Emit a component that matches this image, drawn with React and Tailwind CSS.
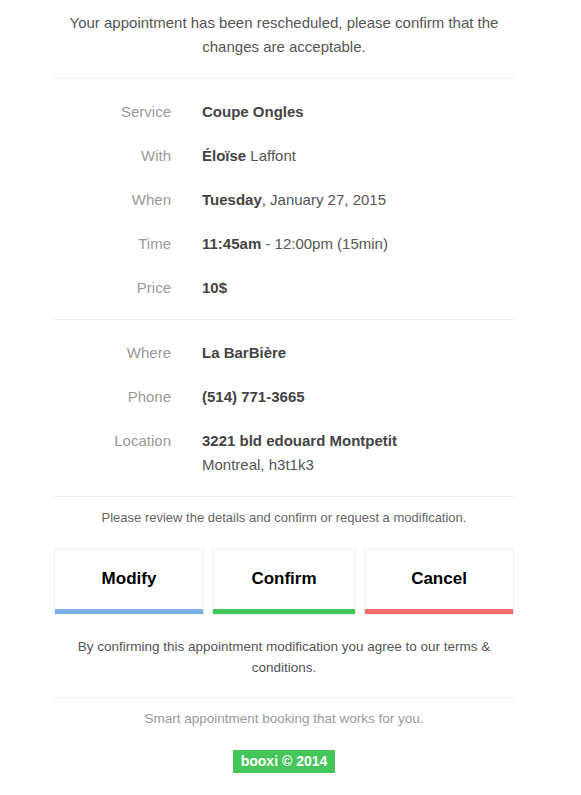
import React from "react";

const Row = ({ label, children }) => (
  <div className="flex pt-[11px] pb-[9px]">
    <div className="w-[117px] shrink-0 text-right text-[#999] leading-[24px]">{label}</div>
    <div className="pl-[31px] text-[#555] leading-[24px]">{children}</div>
  </div>
);

export default function App() {
  return (
    <div className="w-[581px] min-h-[795px] bg-white" style={{ fontFamily: '"Liberation Sans", sans-serif' }}>
      <div className="ml-[54px] w-[460px] text-[15px]">
        <p className="pt-[11px] pb-[19px] text-center leading-[24px] text-[#555]">
          Your appointment has been rescheduled, please confirm that the changes are acceptable.
        </p>
        <div className="h-px bg-[#eeeeee]" />
        <div className="py-[10px]">
          <Row label="Service"><b className="text-[#444]">Coupe Ongles</b></Row>
          <Row label="With"><b className="text-[#444]">Éloïse</b> Laffont</Row>
          <Row label="When"><b className="text-[#444]">Tuesday</b>, January 27, 2015</Row>
          <Row label="Time"><b className="text-[#444]">11:45am</b> - 12:00pm (15min)</Row>
          <Row label="Price"><b className="text-[#444]">10$</b></Row>
        </div>
        <div className="h-px bg-[#eeeeee]" />
        <div className="py-[10px]">
          <Row label="Where"><b className="text-[#444]">La BarBière</b></Row>
          <Row label="Phone"><b className="text-[#444]">(514) 771-3665</b></Row>
          <Row label="Location">
            <b className="text-[#444]">3221 bld edouard Montpetit</b>
            <br />
            Montreal, h3t1k3
          </Row>
        </div>
        <div className="h-px bg-[#eeeeee]" />
        <p className="pt-[11px] pb-[20px] text-center text-[13px] leading-[20px] text-[#666]">
          Please review the details and confirm or request a modification.
        </p>
        <div className="grid grid-cols-[150px_144px_150px] gap-2">
          <button className="h-[67px] border border-[#eeeeee] bg-white flex flex-col">
            <span className="flex-1 flex items-center justify-center text-[17px] font-bold text-black">Modify</span>
            <span className="h-[5px] bg-[#7aaee6]" />
          </button>
          <button className="h-[67px] border border-[#eeeeee] bg-white flex flex-col">
            <span className="flex-1 flex items-center justify-center text-[17px] font-bold text-black">Confirm</span>
            <span className="h-[5px] bg-[#45c65a]" />
          </button>
          <button className="h-[67px] border border-[#eeeeee] bg-white flex flex-col">
            <span className="flex-1 flex items-center justify-center text-[17px] font-bold text-black">Cancel</span>
            <span className="h-[5px] bg-[#f56e6e]" />
          </button>
        </div>
        <p className="px-[20px] pt-[21px] pb-[19px] text-center text-[13.5px] leading-[21px] text-[#555]">
          By confirming this appointment modification you agree to our terms &amp; conditions.
        </p>
        <div className="h-px bg-[#eeeeee]" />
        <p className="pt-[11px] text-center text-[13.5px] leading-[20px] text-[#999]">
          Smart appointment booking that works for you.
        </p>
        <div className="pt-[21px] flex justify-center">
          <span className="inline-block h-[23px] px-[8px] bg-[#45c65a] text-white font-bold text-[14px] leading-[23px]">
            booxi © 2014
          </span>
        </div>
      </div>
    </div>
  );
}
